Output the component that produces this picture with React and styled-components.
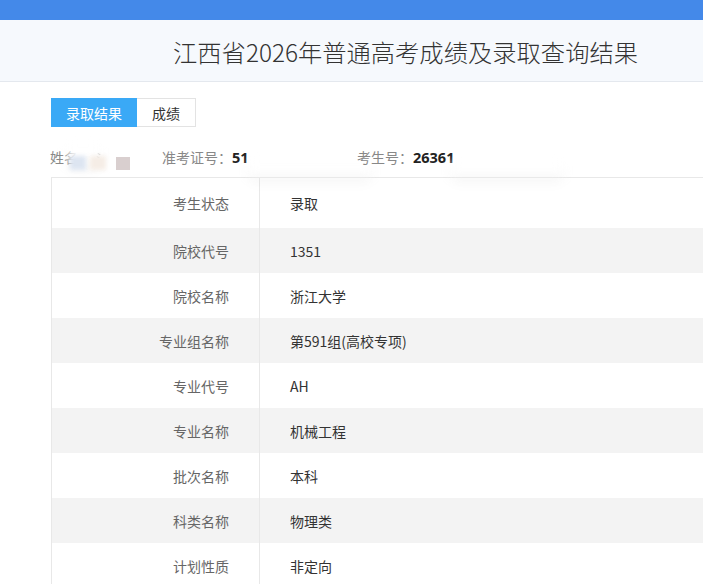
import React from 'react';
import styled, { createGlobalStyle } from 'styled-components';

const GlobalStyle = createGlobalStyle`
    html, body {
        margin: 0;
        padding: 0;
        background: #fff;
        font-family: "Microsoft YaHei", "Noto Sans CJK SC", "Noto Sans", sans-serif;
        overflow: hidden;
    }
`

const rows = [
    ['考生状态', '录取'],
    ['院校代号', '1351'],
    ['院校名称', '浙江大学'],
    ['专业组名称', '第591组(高校专项)'],
    ['专业代号', 'AH'],
    ['专业名称', '机械工程'],
    ['批次名称', '本科'],
    ['科类名称', '物理类'],
    ['计划性质', '非定向'],
]

function App() {
    return (
        <Page>
            <GlobalStyle />
            <TopBar />
            <Header>
                <Title>江西省2026年普通高考成绩及录取查询结果</Title>
            </Header>
            <Main>
                <Tabs>
                    <Tab active>录取结果</Tab>
                    <Tab>成绩</Tab>
                </Tabs>
                <InfoLine>
                    <InfoItem width="112px">
                        <Label>姓名</Label>
                        <Faint>氵</Faint>
                        <Smudge left="18px" top="-4px" w="30px" h="20px" />
                        <Swatch left="20px" top="9px" color="#dde5f1" />
                        <Swatch left="40px" top="9px" color="#f5ede6" />
                        <Swatch left="66px" top="10px" color="#d9cfcf" square />
                    </InfoItem>
                    <InfoItem width="195px">
                        <Label>准考证号：</Label>
                        <Value>51</Value>
                        <Smudge left="88px" top="12px" w="120px" h="16px" />
                    </InfoItem>
                    <InfoItem>
                        <Label>考生号：</Label>
                        <Value>26361</Value>
                        <Smudge left="95px" top="14px" w="110px" h="14px" />
                    </InfoItem>
                </InfoLine>
                <Table>
                    {rows.map(([k, v], i) => (
                        <Row key={k} striped={i % 2 === 1} first={i === 0}>
                            <KeyCell>{k}</KeyCell>
                            <ValueCell>{v}</ValueCell>
                        </Row>
                    ))}
                </Table>
            </Main>
        </Page>
    )
}

export default App


const Page = styled.div`
    width: 703px;
    height: 584px;
    overflow: hidden;
`
const TopBar = styled.div`
    height: 20px;
    background: #4489e9;
`
const Header = styled.div`
    height: 61px;
    background: #f6f9fd;
    border-bottom: 1px solid #e4e8ee;
    display: flex;
    align-items: center;
    padding-left: 173px;
`
const Title = styled.h1`
    margin: 0;
    font-size: 24.3px;
    font-weight: 300;
    color: #333;
    white-space: nowrap;
    padding-top: 2px;
`
const Main = styled.div`
    padding: 16px 0 0 51px;
`
const Tabs = styled.div`
    display: flex;
    height: 29px;
`
const Tab = styled.div`
    display: flex;
    align-items: center;
    justify-content: center;
    width: ${p => p.active ? '86px' : '59px'};
    box-sizing: border-box;
    font-size: 14px;
    color: ${p => p.active ? '#fff' : '#333'};
    background: ${p => p.active ? '#3aa9f6' : '#fff'};
    border: 1px solid ${p => p.active ? '#3aa9f6' : '#e3e3e3'};
    border-left: ${p => p.active ? '1px solid #3aa9f6' : 'none'};
`
const InfoLine = styled.div`
    display: flex;
    align-items: center;
    height: 22px;
    margin-top: 19px;
    margin-left: -1px;
`
const InfoItem = styled.div`
    position: relative;
    display: flex;
    align-items: center;
    width: ${p => p.width || 'auto'};
    font-size: 14px;
`
const Label = styled.span`
    color: #888;
`
const Value = styled.span`
    color: #222;
    font-weight: 700;
    font-family: "Open Sans", "Noto Sans", sans-serif;
    font-size: 14.5px;
`
const Faint = styled.span`
    color: #c4c4c4;
    margin-left: 18px;
    font-size: 12px;
    filter: blur(0.6px);
`
const Smudge = styled.div`
    position: absolute;
    left: ${p => p.left};
    top: ${p => p.top};
    width: ${p => p.w};
    height: ${p => p.h};
    background: rgba(255, 255, 255, 0.9);
    filter: blur(4px);
    box-shadow: 0 6px 10px rgba(0, 0, 0, 0.05);
`
const Swatch = styled.div`
    position: absolute;
    left: ${p => p.left};
    top: ${p => p.top};
    width: ${p => p.square ? '14px' : '16px'};
    height: ${p => p.square ? '13px' : '14px'};
    background: ${p => p.color};
    filter: blur(${p => p.square ? '0.6px' : '2px'});
`
const Table = styled.div`
    margin-top: 9px;
    border-top: 1px solid #e8e8e8;
    border-left: 1px solid #e8e8e8;
`
const Row = styled.div`
    display: flex;
    height: ${p => p.first ? '50px' : '45px'};
    background: ${p => p.striped ? '#f3f3f3' : '#fff'};
    font-size: 14px;
`
const KeyCell = styled.div`
    width: 208px;
    box-sizing: border-box;
    padding-right: 30px;
    display: flex;
    align-items: center;
    justify-content: flex-end;
    color: #666;
    border-right: 1px solid #e8e8e8;
`
const ValueCell = styled.div`
    flex: 1;
    padding-left: 30px;
    display: flex;
    align-items: center;
    color: #333;
`
